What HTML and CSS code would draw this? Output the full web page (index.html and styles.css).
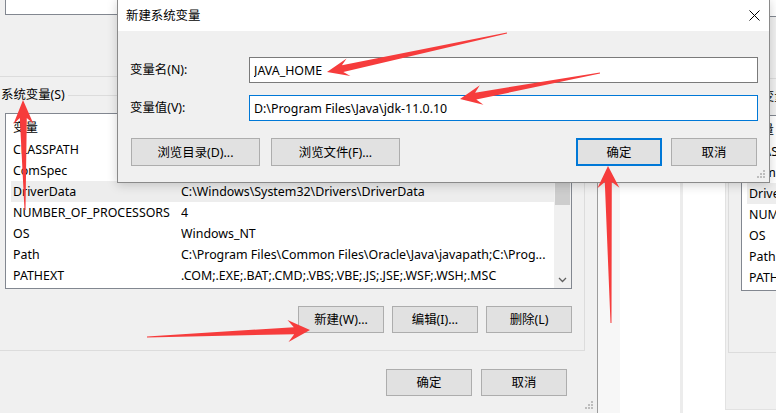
FILE: index.html
```html
<!DOCTYPE html>
<html lang="zh-CN">
<head>
    <meta charset="UTF-8">
    <meta name="viewport" content="width=device-width, initial-scale=1.0">
    <title>新建系统变量</title>
    <link rel="stylesheet" href="styles.css">
</head>
<body>
    <!-- windows lying behind the dialogs -->
    <div class="back-pane"></div>
    <div class="back-line"></div>

    <!-- Environment variables window -->
    <div class="env-window env-left">
        <fieldset class="group">
            <legend>用户变量(U)</legend>
            <div class="list list-user"></div>
            <div class="btn-row">
                <button class="btn">新建(N)...</button>
                <button class="btn">编辑(E)...</button>
                <button class="btn">删除(D)</button>
            </div>
        </fieldset>

        <fieldset class="group">
            <legend>系统变量(S)</legend>
            <div class="list list-sys">
                <div class="rows">
                    <!-- values under the dialog are left out -->
                    <div class="row head"><span class="c1">变量</span><span class="c2"></span></div>
                    <div class="row"><span class="c1">CLASSPATH</span><span class="c2"></span></div>
                    <div class="row"><span class="c1">ComSpec</span><span class="c2"></span></div>
                    <div class="row selected"><span class="c1">DriverData</span><span class="c2">C:\Windows\System32\Drivers\DriverData</span></div>
                    <div class="row"><span class="c1">NUMBER_OF_PROCESSORS</span><span class="c2">4</span></div>
                    <div class="row"><span class="c1">OS</span><span class="c2">Windows_NT</span></div>
                    <div class="row"><span class="c1">Path</span><span class="c2">C:\Program Files\Common Files\Oracle\Java\javapath;C:\Prog...</span></div>
                    <div class="row"><span class="c1">PATHEXT</span><span class="c2">.COM;.EXE;.BAT;.CMD;.VBS;.VBE;.JS;.JSE;.WSF;.WSH;.MSC</span></div>
                </div>
                <div class="scrollbar">
                    <div class="sb-btn"></div>
                    <div class="thumb"></div>
                    <div class="sb-btn sb-down">
                        <svg width="9" height="6" viewBox="0 0 9 6"><path d="M1 1 L4.5 4.5 L8 1" fill="none" stroke="#606060" stroke-width="1.3"/></svg>
                    </div>
                </div>
            </div>
            <div class="btn-row">
                <button class="btn">新建(W)...</button>
                <button class="btn">编辑(I)...</button>
                <button class="btn">删除(L)</button>
            </div>
        </fieldset>

        <div class="btn-row footer">
            <button class="btn">确定</button>
            <button class="btn">取消</button>
        </div>

        <svg class="grip" width="9" height="9" viewBox="0 0 9 9">
            <rect x="6" y="0" width="2" height="2"/><rect x="3" y="3" width="2" height="2"/><rect x="6" y="3" width="2" height="2"/>
            <rect x="0" y="6" width="2" height="2"/><rect x="3" y="6" width="2" height="2"/><rect x="6" y="6" width="2" height="2"/>
        </svg>
    </div>

    <!-- second copy of the same window, further right -->
    <div class="env-window env-right">
        <fieldset class="group">
            <legend>用户变量(U)</legend>
            <div class="list list-user"></div>
            <div class="btn-row">
                <button class="btn">新建(N)...</button>
                <button class="btn">编辑(E)...</button>
                <button class="btn">删除(D)</button>
            </div>
        </fieldset>

        <fieldset class="group">
            <legend>系统变量(S)</legend>
            <div class="list list-sys">
                <div class="rows">
                    <div class="row head"><span class="c1">变量</span></div>
                    <div class="row"><span class="c1">CLASSPATH</span></div>
                    <div class="row"><span class="c1">ComSpec</span></div>
                    <div class="row selected"><span class="c1">DriverData</span></div>
                    <div class="row"><span class="c1">NUMBER_OF_PROCESSORS</span></div>
                    <div class="row"><span class="c1">OS</span></div>
                    <div class="row"><span class="c1">Path</span></div>
                    <div class="row"><span class="c1">PATHEXT</span></div>
                </div>
            </div>
            <div class="btn-row">
                <button class="btn">新建(W)...</button>
                <button class="btn">编辑(I)...</button>
                <button class="btn">删除(L)</button>
            </div>
        </fieldset>
    </div>

    <!-- New system variable dialog -->
    <div class="new-var">
        <div class="title-bar">
            <span>新建系统变量</span>
            <svg class="close" width="11" height="11" viewBox="0 0 11 11">
                <path d="M0.5 0.5 L10.5 10.5 M10.5 0.5 L0.5 10.5" stroke="#000" stroke-width="1"/>
            </svg>
        </div>
        <div class="new-body">
            <div class="field">
                <label for="var-name">变量名(N):</label>
                <input type="text" id="var-name" class="text-input" value="JAVA_HOME">
            </div>
            <div class="field">
                <label for="var-value">变量值(V):</label>
                <input type="text" id="var-value" class="text-input focused" value="D:\Program Files\Java\jdk-11.0.10">
            </div>
            <div class="new-buttons">
                <button class="btn wide">浏览目录(D)...</button>
                <button class="btn wide">浏览文件(F)...</button>
                <span class="spacer"></span>
                <button class="btn default">确定</button>
                <button class="btn">取消</button>
            </div>
        </div>
        <svg class="grip" width="9" height="9" viewBox="0 0 9 9">
            <rect x="6" y="0" width="2" height="2"/><rect x="3" y="3" width="2" height="2"/><rect x="6" y="3" width="2" height="2"/>
            <rect x="0" y="6" width="2" height="2"/><rect x="3" y="6" width="2" height="2"/><rect x="6" y="6" width="2" height="2"/>
        </svg>
    </div>

    <!-- red annotation arrows -->
    <svg class="arrows" width="776" height="413" viewBox="0 0 776 413">
        <polygon points="506.9,32.5 341.9,65.2 346.6,58.5 327,72 350.4,76.1 343.3,72 507.1,33.5"/>
        <polygon points="599.9,72.5 475.1,92.7 479.8,85.2 460,99 483.4,104.8 476.3,99.5 600.1,73.5"/>
        <polygon points="25.5,210 26.8,118 33.4,123.8 23,100 13.4,124.2 19.8,118 24.5,210"/>
        <polygon points="147,337.5 294.2,334.2 288.5,342 310,330 287.5,320 293.8,327.2 147,336.5"/>
        <polygon points="611.5,323 611.8,182 619.4,187.8 608,166 597.4,188.2 604.8,182 610.5,323"/>
    </svg>
</body>
</html>
```

FILE: styles.css
```css
/* General */
* {
    margin: 0;
    padding: 0;
    box-sizing: border-box;
}

body {
    position: relative;
    width: 776px;
    height: 413px;
    overflow: hidden;
    background: #fff;
    color: #000;
    font-family: "Noto Sans", "Noto Sans CJK SC", sans-serif;
    font-size: 12.4px;
    line-height: 16px;
}

.back-pane {
    position: absolute;
    left: 598px;
    top: 0;
    width: 22px;
    height: 413px;
    background: #f7f7f7;
}

.back-line {
    position: absolute;
    left: 680px;
    top: 0;
    width: 3px;
    height: 413px;
    background: #ececec;
}

/* Environment variables window */
.env-window {
    position: absolute;
    width: 609px;
    padding: 0 12px 0 2px;
    background: #f0f0f0;
    border: 1px solid #e2e2e2;
    border-right-color: #9c9c9c;
}

.env-left {
    left: -11px;
    top: -100px;
    height: 514px;
}

.env-right {
    left: 725px;
    top: -98px;
    height: 508px;
}

.group {
    border: 1px solid #dcdcdc;
    padding: 10px 12px 17px;
    min-width: 0;
}

.group + .group {
    margin-top: 10px;
}

.group legend {
    margin-left: -7px;
    padding: 0 3px;
    line-height: 16px;
}

.list {
    display: flex;
    background: #fff;
    border: 1px solid #828790;
}

.list-user {
    height: 88px;
}

.list-sys {
    height: 176px;
}

.rows {
    flex: 1;
    min-width: 0;
    padding-left: 5px;
    overflow: hidden;
}

.row {
    display: flex;
    height: 21px;
    line-height: 21px;
    white-space: nowrap;
}

.row.head {
    height: 25px;
    line-height: 27px;
}

.row.selected {
    background: #ededed;
}

.c1 {
    flex: none;
    width: 170px;
    padding-left: 2px;
}

.c2 {
    flex: 1;
    overflow: hidden;
}

.scrollbar {
    width: 17px;
    display: flex;
    flex-direction: column;
    background: #f0f0f0;
}

.sb-btn {
    height: 17px;
}

.thumb {
    height: 74px;
    margin: 0 1px;
    background: #cdcdcd;
}

.sb-down {
    margin-top: auto;
    display: flex;
    align-items: center;
    justify-content: center;
}

/* Buttons */
.btn {
    width: 86px;
    height: 27px;
    background: #e1e1e1;
    border: 1px solid #adadad;
    color: #000;
    font: inherit;
    line-height: 25px;
}

.btn-row {
    display: flex;
    justify-content: flex-end;
    gap: 8px;
    margin-top: 17px;
}

.footer {
    gap: 9px;
    margin: 18px 18px 0 0;
}

.grip {
    position: absolute;
    right: 3px;
    bottom: 3px;
    fill: #bdbdbd;
}

/* New system variable dialog */
.new-var {
    position: absolute;
    left: 117px;
    top: -1px;
    width: 653px;
    height: 184px;
    background: #f0f0f0;
    border: 1px solid #8a8a8a;
    box-shadow: 0 2px 10px rgba(0, 0, 0, 0.18);
}

.title-bar {
    display: flex;
    align-items: center;
    height: 31px;
    padding: 0 9px 0 8px;
    background: #fff;
}

.close {
    margin-left: auto;
}

.new-body {
    padding: 26px 11px 16px 12px;
}

.field {
    display: flex;
    align-items: center;
}

.field + .field {
    margin-top: 12px;
}

.field label {
    width: 119px;
}

.text-input {
    width: 509px;
    height: 26px;
    padding: 0 4px;
    background: #fff;
    border: 1px solid #7a7a7a;
    color: #000;
    font: inherit;
    outline: none;
}

.text-input.focused {
    border-color: #0078d7;
}

.new-buttons {
    display: flex;
    gap: 9px;
    margin: 17px 1px 0 1px;
}

.new-buttons .btn {
    height: 28px;
}

.btn.wide {
    width: 129px;
}

.btn.wide + .btn.wide {
    margin-left: 2px;
}

.spacer {
    flex: 1;
}

.btn.default {
    border: 2px solid #0078d7;
}

/* Annotation arrows */
.arrows {
    position: absolute;
    left: 0;
    top: 0;
    pointer-events: none;
    fill: #f63c3c;
}
```
